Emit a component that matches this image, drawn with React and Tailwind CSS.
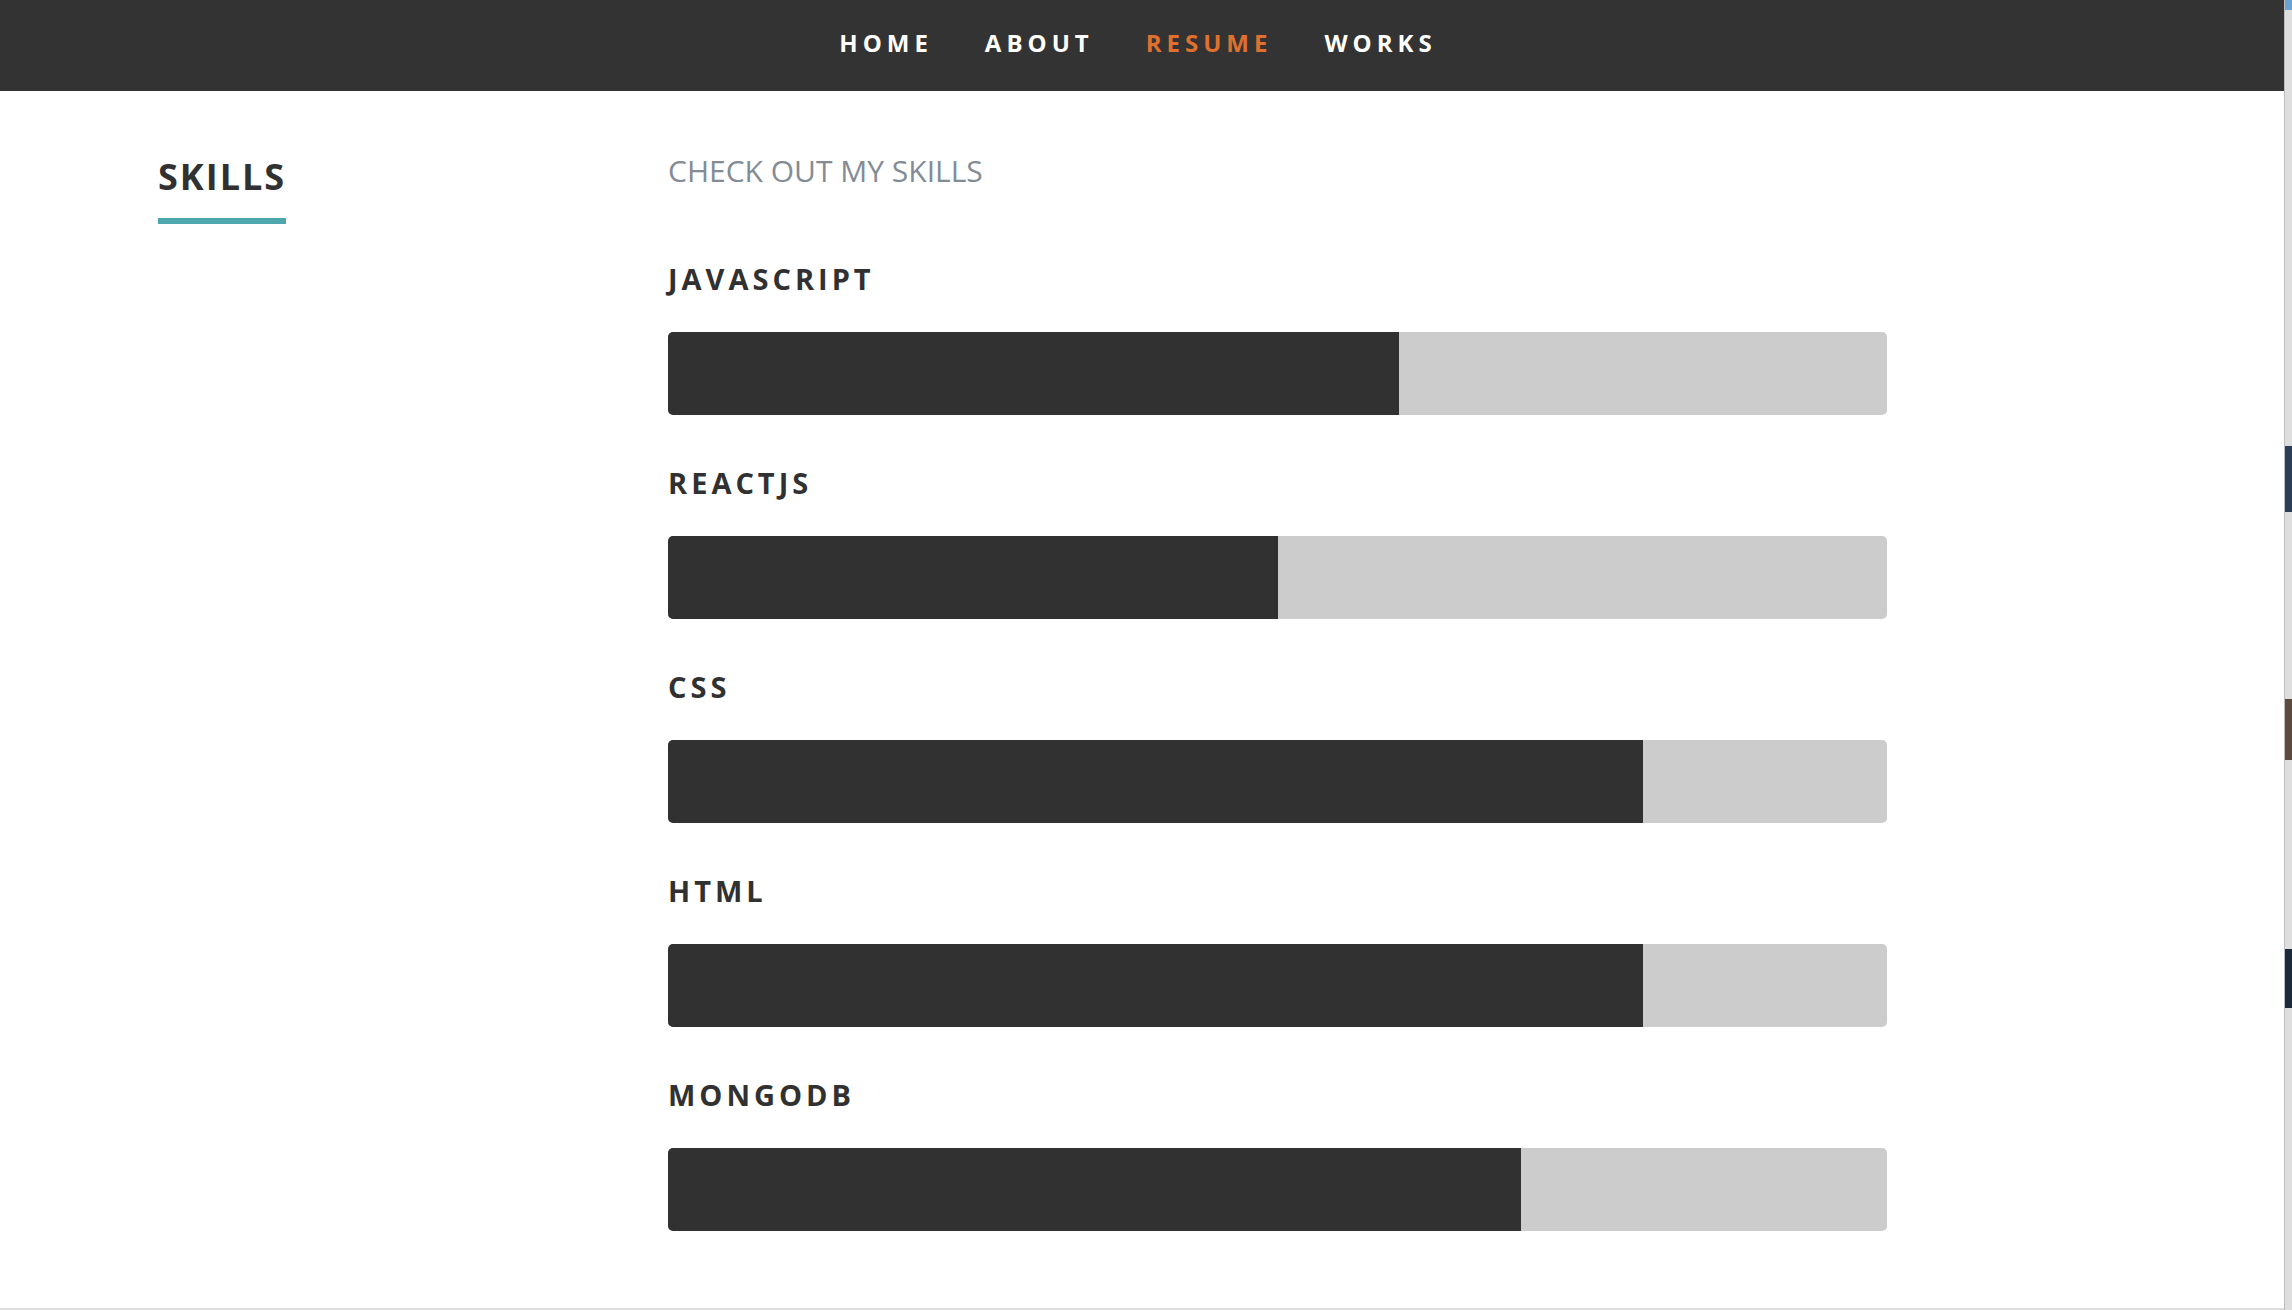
import React from 'react';

const links = [
  { label: 'Home' },
  { label: 'About' },
  { label: 'Resume', active: true },
  { label: 'Works' },
];

const skills = [
  { name: 'JavaScript', level: 60 },
  { name: 'ReactJS', level: 50 },
  { name: 'CSS', level: 80 },
  { name: 'HTML', level: 80 },
  { name: 'MongoDB', level: 70 },
];

function Nav() {
  return (
    <nav className="flex h-[91px] shrink-0 justify-center bg-[#333333]">
      <ul className="flex gap-[52px] pr-[8px] pt-[27px]">
        {links.map((link) => (
          <li key={link.label}>
            <a
              href="#"
              className={`block text-[24px] font-bold uppercase leading-[32px] tracking-[5px] ${
                link.active ? 'text-[#e0702f]' : 'text-white'
              }`}
            >
              {link.label}
            </a>
          </li>
        ))}
      </ul>
    </nav>
  );
}

function SkillBar({ name, level }) {
  return (
    <li className="flex flex-col gap-[34px]">
      <em className="text-[29px] font-bold not-italic uppercase leading-[38px] tracking-[4px] text-[#313131]">
        {name}
      </em>
      <div className="flex h-[83px] w-[1219px] overflow-hidden rounded-[5px] bg-[#cccccc]">
        <span className="h-full bg-[#313131]" style={{ width: `${level}%` }} />
      </div>
    </li>
  );
}

// the sliver of another window at the right edge of the screenshot
function SideStrip() {
  return (
    <div className="flex w-[8px] shrink-0 flex-col border-l border-[#bdbdbd] bg-[#dedede]">
      <div className="h-[10px] bg-[#6aa3d3]" />
      <div className="mt-[436px] h-[66px] bg-[#2c3e55]" />
      <div className="mt-[187px] h-[61px] bg-[#5a4a40]" />
      <div className="mt-[189px] h-[59px] bg-[#1d2a3a]" />
    </div>
  );
}

export default function App() {
  return (
    <div className="flex h-[1310px] w-[2292px] overflow-hidden bg-white font-['Open_Sans',sans-serif]">
      <div className="flex flex-1 flex-col border-b-2 border-[#dcdcdc]">
        <Nav />
        <section className="flex pl-[158px] pt-[61px]">
          <div className="w-[510px] shrink-0">
            <h1 className="mt-[4px] text-[36px] font-bold uppercase leading-[42px] tracking-[2px] text-[#313131]">
              <span className="inline-block border-b-[6px] border-[#4ea7ac] pb-[20px]">Skills</span>
            </h1>
          </div>
          <div className="flex flex-col">
            <p className="text-[30px] font-normal uppercase leading-[38px] text-[#838c95]">
              Check out my skills
            </p>
            <ul className="mt-[70px] flex flex-col gap-[49px]">
              {skills.map((s) => (
                <SkillBar key={s.name} {...s} />
              ))}
            </ul>
          </div>
        </section>
      </div>
      <SideStrip />
    </div>
  );
}
